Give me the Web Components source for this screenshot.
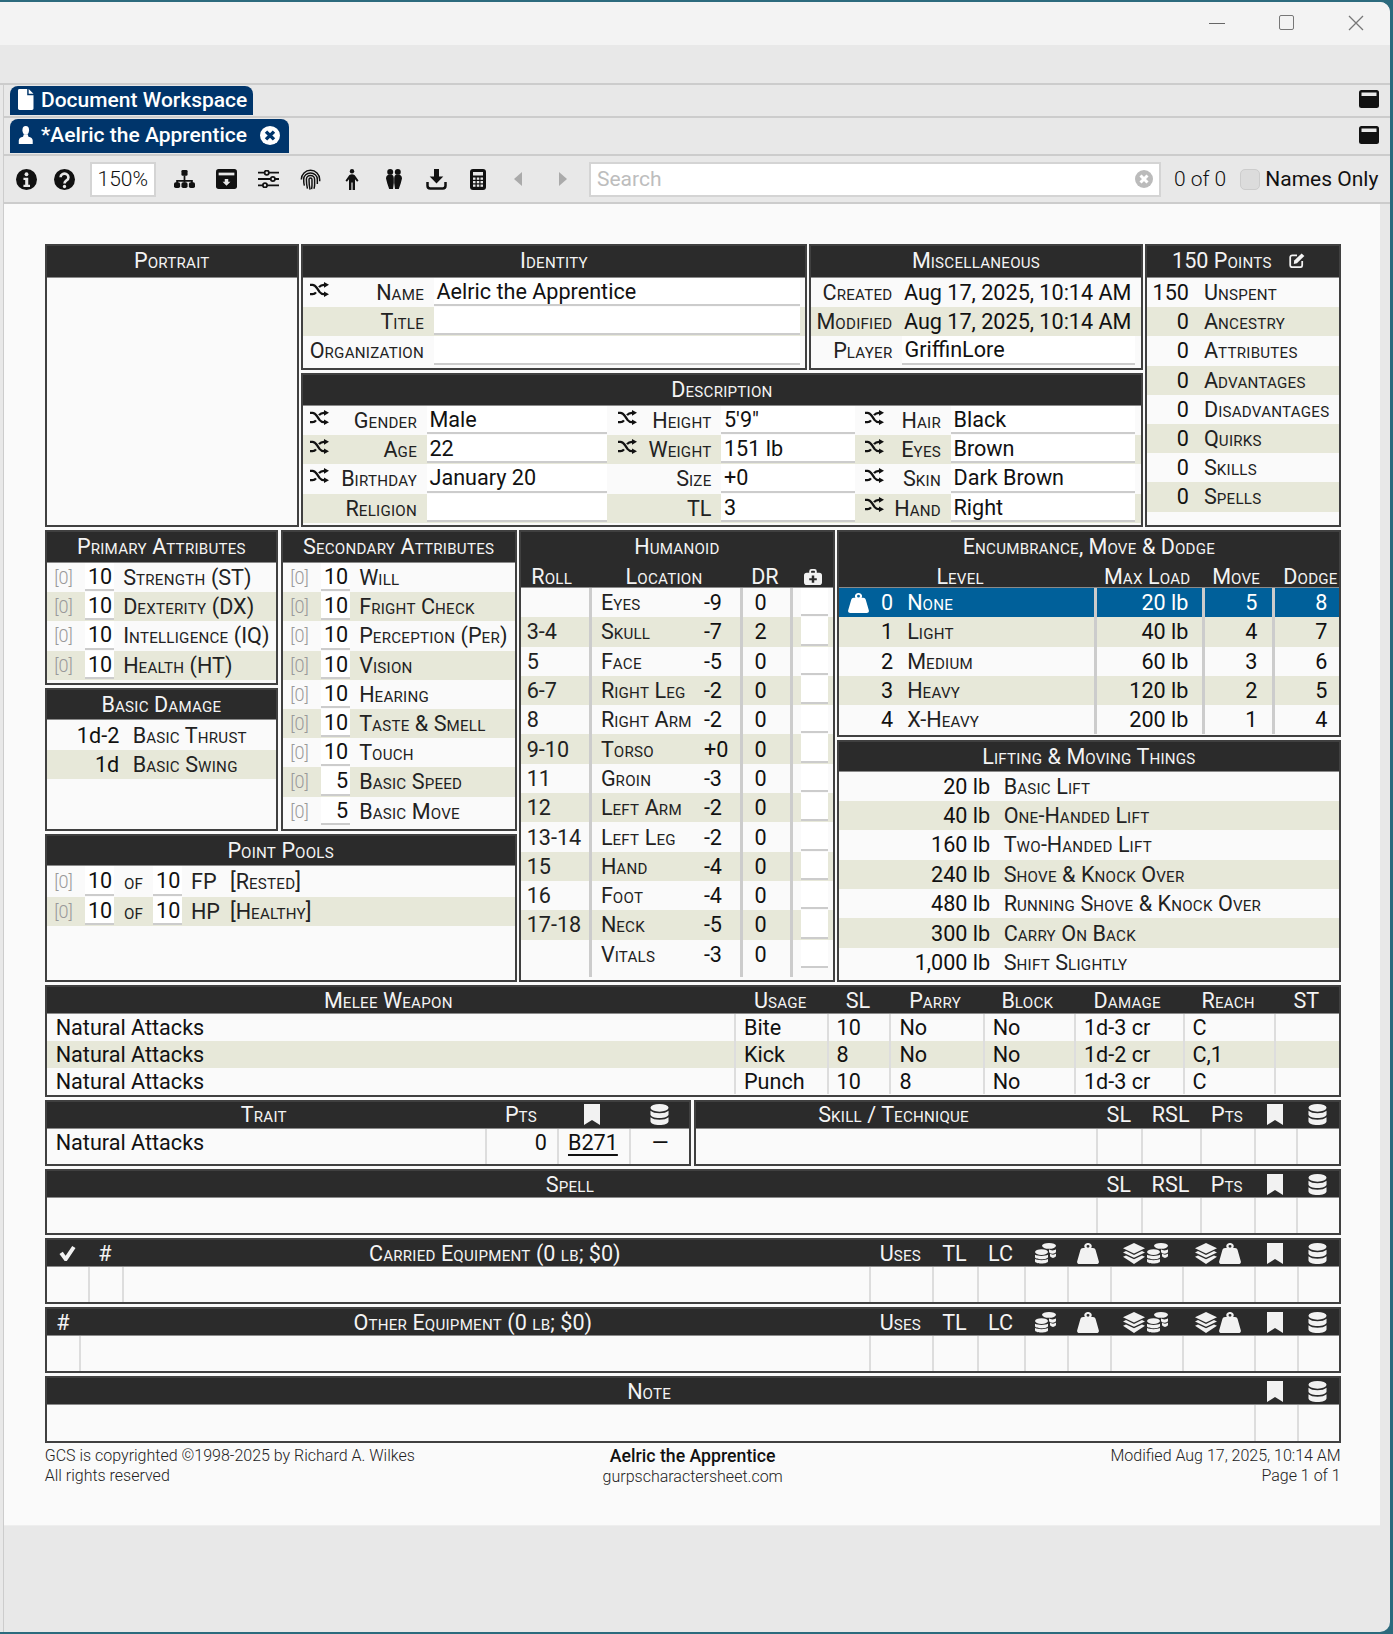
<!DOCTYPE html>
<html lang="en"><head><meta charset="utf-8"><title>GCS</title>
<style>
html,body{margin:0;padding:0;background:#2c6a7d;width:1393px;height:1634px;overflow:hidden}
body{font-family:Roboto,"Liberation Sans",sans-serif;font-size:21.6px;color:#111}
</style></head>
<body>
<gcs-window>
 <gcs-dock label="Document Workspace" icon="doc" style="border-top:0;--dm:3px"></gcs-dock>
 <gcs-dock label="*Aelric the Apprentice" icon="bust" closable style="--dh:35px;--th:34px;--pr:9px;--dm:2px"></gcs-dock>
 <gcs-toolbar></gcs-toolbar>
 <gcs-page>
 <gcs-sheet>
  <gcs-top>
   <gcs-panel title="Portrait" style="grid-column:1;grid-row:1 / span 2;--hh:32px"></gcs-panel>
   <gcs-panel title="Identity" style="grid-column:2;grid-row:1;--hh:32px;--cols:131px 366px 1fr">
    <gcs-row><gcs-lbl shuffle>Name</gcs-lbl><gcs-fld>Aelric the Apprentice</gcs-fld></gcs-row>
    <gcs-row band><gcs-lbl>Title</gcs-lbl><gcs-fld></gcs-fld></gcs-row>
    <gcs-row><gcs-lbl style="padding-left:0">Organization</gcs-lbl><gcs-fld></gcs-fld></gcs-row>
   </gcs-panel>
   <gcs-panel title="Miscellaneous" style="grid-column:3;grid-row:1;--hh:32px;--cols:91px 233px 1fr;--lp:9.500px">
    <gcs-row><gcs-lbl style="padding-left:0">Created</gcs-lbl><gcs-val>Aug 17, 2025, 10:14 AM</gcs-val></gcs-row>
    <gcs-row band><gcs-lbl style="padding-left:0">Modified</gcs-lbl><gcs-val>Aug 17, 2025, 10:14 AM</gcs-val></gcs-row>
    <gcs-row><gcs-lbl>Player</gcs-lbl><gcs-fld>GriffinLore</gcs-fld></gcs-row>
   </gcs-panel>
   <gcs-panel title="150 Points" edit style="grid-column:4;grid-row:1 / span 2;--tg:17px;--hh:32px;--tpr:9px">
    <gcs-stat val="150">Unspent</gcs-stat><gcs-stat band val="0">Ancestry</gcs-stat><gcs-stat val="0">Attributes</gcs-stat><gcs-stat band val="0">Advantages</gcs-stat><gcs-stat val="0">Disadvantages</gcs-stat><gcs-stat band val="0">Quirks</gcs-stat><gcs-stat val="0">Skills</gcs-stat><gcs-stat band val="0">Spells</gcs-stat>
   </gcs-panel>
   <gcs-panel title="Description" style="grid-column:2 / span 2;grid-row:2;--cols:124px 180px 114.500px 133.500px 96px 184px 1fr">
    <gcs-row><gcs-lbl shuffle>Gender</gcs-lbl><gcs-fld>Male</gcs-fld><gcs-lbl shuffle style="--ll:11px">Height</gcs-lbl><gcs-fld>5'9"</gcs-fld><gcs-lbl shuffle style="--ll:10.500px">Hair</gcs-lbl><gcs-fld>Black</gcs-fld></gcs-row>
    <gcs-row band><gcs-lbl shuffle>Age</gcs-lbl><gcs-fld>22</gcs-fld><gcs-lbl shuffle style="--ll:11px">Weight</gcs-lbl><gcs-fld>151 lb</gcs-fld><gcs-lbl shuffle style="--ll:10.500px">Eyes</gcs-lbl><gcs-fld>Brown</gcs-fld></gcs-row>
    <gcs-row><gcs-lbl shuffle>Birthday</gcs-lbl><gcs-fld>January 20</gcs-fld><gcs-lbl>Size</gcs-lbl><gcs-fld>+0</gcs-fld><gcs-lbl shuffle style="--ll:10.500px">Skin</gcs-lbl><gcs-fld>Dark Brown</gcs-fld></gcs-row>
    <gcs-row band><gcs-lbl>Religion</gcs-lbl><gcs-fld></gcs-fld><gcs-lbl>TL</gcs-lbl><gcs-fld>3</gcs-fld><gcs-lbl shuffle style="--ll:10.500px">Hand</gcs-lbl><gcs-fld>Right</gcs-fld></gcs-row>
   </gcs-panel>
  </gcs-top>
  <gcs-flow style="height:452px">
   <gcs-flow style="flex-direction:column;gap:3px;width:472px">
    <gcs-flow style="height:301px">
     <gcs-flow style="flex-direction:column;gap:3px;width:233.500px">
      <gcs-panel title="Primary Attributes" style="height:155px">
       <gcs-attr val="10">Strength (ST)</gcs-attr><gcs-attr band val="10">Dexterity (DX)</gcs-attr><gcs-attr val="10">Intelligence (IQ)</gcs-attr><gcs-attr band val="10">Health (HT)</gcs-attr>
      </gcs-panel>
      <gcs-panel title="Basic Damage" style="flex:1;--hh:30px">
       <gcs-stat val="1d-2" style="--c:72.600px 1fr;--g:13.400px;height:30px">Basic Thrust</gcs-stat><gcs-stat band val="1d" style="--c:72.600px 1fr;--g:13.400px">Basic Swing</gcs-stat>
      </gcs-panel>
     </gcs-flow>
     <gcs-panel title="Secondary Attributes" style="flex:1">
      <gcs-attr val="10">Will</gcs-attr><gcs-attr band val="10">Fright Check</gcs-attr><gcs-attr val="10">Perception (Per)</gcs-attr><gcs-attr band val="10">Vision</gcs-attr><gcs-attr val="10">Hearing</gcs-attr><gcs-attr band val="10">Taste &amp; Smell</gcs-attr><gcs-attr val="10">Touch</gcs-attr><gcs-attr band val="5">Basic Speed</gcs-attr><gcs-attr val="5">Basic Move</gcs-attr>
     </gcs-panel>
    </gcs-flow>
    <gcs-panel title="Point Pools" style="flex:1;--hh:30px">
     <gcs-pool val="10" key="FP" style="height:30.500px">[Rested]</gcs-pool><gcs-pool band val="10" key="HP">[Healthy]</gcs-pool>
    </gcs-panel>
   </gcs-flow>
   <gcs-panel title="Humanoid" style="width:315.500px;--hh:56px;--tl:30px">
    <gcs-subhead slot="head" style="--cols:61px 163.700px 38px 1fr"><gcs-th>Roll</gcs-th><gcs-th>Location</gcs-th><gcs-th>DR</gcs-th><gcs-th style="padding-left:10px"><gcs-icon name="lock" w="18" h="16"></gcs-icon></gcs-th></gcs-subhead>
    <gcs-hit r="" p="-9" d="0">Eyes</gcs-hit>
    <gcs-hit band r="3-4" p="-7" d="2">Skull</gcs-hit>
    <gcs-hit r="5" p="-5" d="0">Face</gcs-hit>
    <gcs-hit band r="6-7" p="-2" d="0">Right Leg</gcs-hit>
    <gcs-hit r="8" p="-2" d="0">Right Arm</gcs-hit>
    <gcs-hit band r="9-10" p="+0" d="0">Torso</gcs-hit>
    <gcs-hit r="11" p="-3" d="0">Groin</gcs-hit>
    <gcs-hit band r="12" p="-2" d="0">Left Arm</gcs-hit>
    <gcs-hit r="13-14" p="-2" d="0">Left Leg</gcs-hit>
    <gcs-hit band r="15" p="-4" d="0">Hand</gcs-hit>
    <gcs-hit r="16" p="-4" d="0">Foot</gcs-hit>
    <gcs-hit band r="17-18" p="-5" d="0">Neck</gcs-hit>
    <gcs-hit r="" p="-3" d="0">Vitals</gcs-hit>
    <gcs-hit blank style="height:8px"></gcs-hit>
   </gcs-panel>
   <gcs-flow style="flex-direction:column;gap:2.500px;flex:1">
    <gcs-panel title="Encumbrance, Move &amp; Dodge" style="height:207px;--hh:56px;--tl:30px">
     <gcs-subhead slot="head" style="--cols:242px 132px 46px 1fr"><gcs-th>Level</gcs-th><gcs-th>Max Load</gcs-th><gcs-th>Move</gcs-th><gcs-th style="justify-content:flex-end;padding-right:1px">Dodge</gcs-th></gcs-subhead>
     <gcs-enc sel n="0" load="20 lb" move="5" dodge="8">None</gcs-enc>
     <gcs-enc band n="1" load="40 lb" move="4" dodge="7">Light</gcs-enc>
     <gcs-enc n="2" load="60 lb" move="3" dodge="6">Medium</gcs-enc>
     <gcs-enc band n="3" load="120 lb" move="2" dodge="5">Heavy</gcs-enc>
     <gcs-enc n="4" load="200 lb" move="1" dodge="4">X-Heavy</gcs-enc>
    </gcs-panel>
    <gcs-panel title="Lifting &amp; Moving Things" style="flex:1;--hh:30px;--c:151px 1fr;--g:13.500px;--sh:29.400px">
     <gcs-stat val="20 lb">Basic Lift</gcs-stat>
     <gcs-stat band val="40 lb">One-Handed Lift</gcs-stat>
     <gcs-stat val="160 lb">Two-Handed Lift</gcs-stat>
     <gcs-stat band val="240 lb">Shove &amp; Knock Over</gcs-stat>
     <gcs-stat val="480 lb">Running Shove &amp; Knock Over</gcs-stat>
     <gcs-stat band val="300 lb">Carry On Back</gcs-stat>
     <gcs-stat val="1,000 lb">Shift Slightly</gcs-stat>
    </gcs-panel>
   </gcs-flow>
  </gcs-flow>
  <gcs-panel style="--hh:27px;--cols:687.300px 92.600px 62.900px 93.200px 91.300px 108.600px 91.400px 1fr;height:111.500px">
   <gcs-tr slot="head" style="--rh:26px"><gcs-th style="padding-right:4px">Melee Weapon</gcs-th><gcs-th>Usage</gcs-th><gcs-th>SL</gcs-th><gcs-th style="padding-right:2px">Parry</gcs-th><gcs-th style="padding-right:2px">Block</gcs-th><gcs-th style="padding-right:2px">Damage</gcs-th><gcs-th>Reach</gcs-th><gcs-th>ST</gcs-th></gcs-tr>
   <gcs-tr><gcs-td>Natural Attacks</gcs-td><gcs-td>Bite</gcs-td><gcs-td>10</gcs-td><gcs-td>No</gcs-td><gcs-td>No</gcs-td><gcs-td>1d-3 cr</gcs-td><gcs-td>C</gcs-td><gcs-td></gcs-td></gcs-tr>
   <gcs-tr band><gcs-td>Natural Attacks</gcs-td><gcs-td>Kick</gcs-td><gcs-td>8</gcs-td><gcs-td>No</gcs-td><gcs-td>No</gcs-td><gcs-td>1d-2 cr</gcs-td><gcs-td>C,1</gcs-td><gcs-td></gcs-td></gcs-tr>
   <gcs-tr><gcs-td>Natural Attacks</gcs-td><gcs-td>Punch</gcs-td><gcs-td>10</gcs-td><gcs-td>8</gcs-td><gcs-td>No</gcs-td><gcs-td>1d-3 cr</gcs-td><gcs-td>C</gcs-td><gcs-td></gcs-td></gcs-tr>
  </gcs-panel>
  <gcs-flow style="height:66.500px">
   <gcs-panel style="width:646.500px;--hh:27px;--cols:438.300px 72px 72px 1fr">
    <gcs-tr slot="head" style="--rh:26px"><gcs-th style="padding-right:4px">Trait</gcs-th><gcs-th>Pts</gcs-th><gcs-th style="padding-right:2px"><gcs-icon name="bookmark" w="16" h="21"></gcs-icon></gcs-th><gcs-th><gcs-icon name="database" w="19" h="21"></gcs-icon></gcs-th></gcs-tr>
    <gcs-tr fill><gcs-td top>Natural Attacks</gcs-td><gcs-td top style="--jc:flex-end;padding:0 10px 0 0">0</gcs-td><gcs-td top style="padding-left:9px"><u style="text-underline-offset:4px;text-decoration-thickness:2px">B271</u></gcs-td><gcs-td top style="--jc:center;padding:0">—</gcs-td></gcs-tr>
   </gcs-panel>
   <gcs-panel style="flex:1;--hh:27px;--cols:400.800px 44.700px 59px 53.700px 42.300px 1fr">
    <gcs-tr slot="head" style="--rh:26px"><gcs-th style="padding-right:5px">Skill / Technique</gcs-th><gcs-th>SL</gcs-th><gcs-th>RSL</gcs-th><gcs-th>Pts</gcs-th><gcs-th><gcs-icon name="bookmark" w="16" h="21"></gcs-icon></gcs-th><gcs-th><gcs-icon name="database" w="19" h="21"></gcs-icon></gcs-th></gcs-tr>
    <gcs-tr fill><gcs-td></gcs-td><gcs-td></gcs-td><gcs-td></gcs-td><gcs-td></gcs-td><gcs-td></gcs-td><gcs-td></gcs-td></gcs-tr>
   </gcs-panel>
  </gcs-flow>
  <gcs-panel style="height:66px;--hh:27px;--cols:1049.600px 44.700px 59px 53.700px 42.300px 1fr">
   <gcs-tr slot="head" style="--rh:26px"><gcs-th style="padding-right:3px">Spell</gcs-th><gcs-th>SL</gcs-th><gcs-th>RSL</gcs-th><gcs-th>Pts</gcs-th><gcs-th><gcs-icon name="bookmark" w="16" h="21"></gcs-icon></gcs-th><gcs-th><gcs-icon name="database" w="19" h="21"></gcs-icon></gcs-th></gcs-tr>
   <gcs-tr fill><gcs-td></gcs-td><gcs-td></gcs-td><gcs-td></gcs-td><gcs-td></gcs-td><gcs-td></gcs-td><gcs-td></gcs-td></gcs-tr>
  </gcs-panel>
  <gcs-panel style="height:66px;--hh:27px;--cols:41px 34.300px 746.700px 63.300px 45px 47px 43px 43px 72px 71.700px 43.300px 1fr">
   <gcs-tr slot="head" style="--rh:26px"><gcs-th><gcs-icon name="check" w="17" h="15"></gcs-icon></gcs-th><gcs-th>#</gcs-th><gcs-th style="padding-right:1px">Carried Equipment (0 lb; $0)</gcs-th><gcs-th>Uses</gcs-th><gcs-th>TL</gcs-th><gcs-th>LC</gcs-th><gcs-th><gcs-icon name="coins" w="21" h="21"></gcs-icon></gcs-th><gcs-th><gcs-icon name="weight" w="22" h="21"></gcs-icon></gcs-th><gcs-th><gcs-icon name="layers" w="22" h="21"></gcs-icon><gcs-icon name="coins" w="21" h="21"></gcs-icon></gcs-th><gcs-th><gcs-icon name="layers" w="22" h="21"></gcs-icon><gcs-icon name="weight" w="22" h="21"></gcs-icon></gcs-th><gcs-th><gcs-icon name="bookmark" w="16" h="21"></gcs-icon></gcs-th><gcs-th><gcs-icon name="database" w="19" h="21"></gcs-icon></gcs-th></gcs-tr>
   <gcs-tr fill><gcs-td></gcs-td><gcs-td></gcs-td><gcs-td></gcs-td><gcs-td></gcs-td><gcs-td></gcs-td><gcs-td></gcs-td><gcs-td></gcs-td><gcs-td></gcs-td><gcs-td></gcs-td><gcs-td></gcs-td><gcs-td></gcs-td><gcs-td></gcs-td></gcs-tr>
  </gcs-panel>
  <gcs-panel style="height:66px;--hh:27px;--cols:32.300px 789.700px 63.300px 45px 47px 43px 43px 72px 71.700px 43.300px 1fr">
   <gcs-tr slot="head" style="--rh:26px"><gcs-th>#</gcs-th><gcs-th style="padding-right:2px">Other Equipment (0 lb; $0)</gcs-th><gcs-th>Uses</gcs-th><gcs-th>TL</gcs-th><gcs-th>LC</gcs-th><gcs-th><gcs-icon name="coins" w="21" h="21"></gcs-icon></gcs-th><gcs-th><gcs-icon name="weight" w="22" h="21"></gcs-icon></gcs-th><gcs-th><gcs-icon name="layers" w="22" h="21"></gcs-icon><gcs-icon name="coins" w="21" h="21"></gcs-icon></gcs-th><gcs-th><gcs-icon name="layers" w="22" h="21"></gcs-icon><gcs-icon name="weight" w="22" h="21"></gcs-icon></gcs-th><gcs-th><gcs-icon name="bookmark" w="16" h="21"></gcs-icon></gcs-th><gcs-th><gcs-icon name="database" w="19" h="21"></gcs-icon></gcs-th></gcs-tr>
   <gcs-tr fill><gcs-td></gcs-td><gcs-td></gcs-td><gcs-td></gcs-td><gcs-td></gcs-td><gcs-td></gcs-td><gcs-td></gcs-td><gcs-td></gcs-td><gcs-td></gcs-td><gcs-td></gcs-td><gcs-td></gcs-td><gcs-td></gcs-td></gcs-tr>
  </gcs-panel>
  <gcs-panel style="height:66.500px;--hh:27px;--cols:1207px 43.300px 1fr">
   <gcs-tr slot="head" style="--rh:26px"><gcs-th style="padding-right:2px">Note</gcs-th><gcs-th><gcs-icon name="bookmark" w="16" h="21"></gcs-icon></gcs-th><gcs-th><gcs-icon name="database" w="19" h="21"></gcs-icon></gcs-th></gcs-tr>
   <gcs-tr fill><gcs-td></gcs-td><gcs-td></gcs-td><gcs-td></gcs-td></gcs-tr>
  </gcs-panel>
  <gcs-foot></gcs-foot>
 </gcs-sheet>
 </gcs-page>
</gcs-window>
<script>
const band=(x,y,w)=>`M${x} ${y}c${w*.2} 1.600 ${w*.8} 1.600 ${w} 0v2.200c0 1.300-${w*.2} 2.400-${w/2} 2.400s-${w/2}-1.100-${w/2}-2.400z`;
const ICONS={
 info:['0 0 24 24',`<circle cx="12" cy="12" r="12"/><circle cx="12" cy="6" r="2.200" fill="#e8e8e8"/><path fill="#e8e8e8" d="M8.500 10h5.500v8h2v2.500H8.500V18h2v-5.500h-2z"/>`],
 help:['0 0 24 24',`<circle cx="12" cy="12" r="12"/><path fill="none" stroke="#e8e8e8" stroke-width="3" d="M7.500 9.500a4.500 4.200 0 1 1 6.800 3.600c-1.500 1-2.300 1.600-2.300 3.400"/><circle cx="12" cy="20" r="1.900" fill="#e8e8e8"/>`],
 sitemap:['0 0 24 20',`<rect x="8.500" width="7" height="6.500" rx="1.500"/><path fill="none" stroke="currentColor" stroke-width="2" d="M12 6v8M3.500 15v-3h17v3"/><rect y="13.500" width="7" height="6.500" rx="2"/><rect x="8.500" y="13.500" width="7" height="6.500" rx="2"/><rect x="17" y="13.500" width="7" height="6.500" rx="2"/>`],
 save:['0 0 24 22',`<rect width="24" height="22" rx="3"/><rect x="3" y="4" width="18" height="3" fill="#e8e8e8"/><path fill="#e8e8e8" d="M10 11h4v3h2.500L12 18.500 7.500 14H10z"/>`],
 sliders:['0 0 24 20',`<path fill="none" stroke="currentColor" stroke-width="2" d="M0 3h24M0 10h24M0 17h24"/><g fill="#e8e8e8" stroke="currentColor" stroke-width="2"><circle cx="10" cy="3" r="2.400"/><circle cx="17" cy="10" r="2.400"/><circle cx="8" cy="17" r="2.400"/></g>`],
 finger:['0 0 24 24',`<g fill="none" stroke="currentColor" stroke-width="1.700"><path d="M1.500 12c0-6 4.700-10.500 10.500-10.500S22.500 6 22.500 12v2"/><path d="M5 19c-.6-2-.8-4.500-.8-7 0-4.300 3.500-7.500 7.800-7.500s7.800 3.200 7.800 7.500v5"/><path d="M8.500 22.500C7.600 19 7.300 16 7.300 12c0-2.600 2.100-4.600 4.700-4.600s4.700 2 4.700 4.600v6c0 1.700-.2 3-.8 4.500"/><path d="M11.500 23.500c-.8-3.500-1.200-7-1.200-11.500 0-1 .7-1.800 1.700-1.800s1.700.8 1.700 1.800v6.500c0 1.700-.2 3-.5 4.500"/></g>`],
 person:['0 0 14 21',`<circle cx="7" cy="2.200" r="2.200"/><path d="M7 5.200c-1.800 0-2.700.7-3.300 1.800L.5 11.500l1.400 1.200L4 10.300V21h2.400v-7.500h1.200V21H10V10.300l2.100 2.400 1.400-1.200L10.300 7c-.6-1.100-1.500-1.800-3.300-1.800z"/>`],
 people:['0 0 16 20',`<ellipse cx="4.200" cy="2.900" rx="3" ry="2.900"/><ellipse cx="11.800" cy="2.900" rx="3" ry="2.900"/><path d="M0 9.500c0-2.500 1.600-4 4.300-4s3.500 1.500 3.500 4V14l-.8 6H3.200L1.300 14.500zM16 9.500c0-2.500-1.600-4-4.300-4s-3.500 1.500-3.500 4V14l.8 6h3.800l1.900-5.500z"/>`],
 download:['0 0 21 21',`<path d="M8 0h5v7.500h4.300l-6.800 7-6.800-7H8z"/><path fill="none" stroke="currentColor" stroke-width="2.500" d="M1.500 13v3.800a2.700 2.700 0 0 0 2.700 2.700h12.600a2.700 2.700 0 0 0 2.700-2.700V13"/>`],
 calc:['0 0 16 21',`<rect width="16" height="21" rx="3"/><rect x="3" y="3" width="10" height="3.500" fill="#e8e8e8"/><g fill="#e8e8e8"><rect x="3" y="8.500" width="2.500" height="2.300"/><rect x="6.800" y="8.500" width="2.500" height="2.300"/><rect x="10.500" y="8.500" width="2.500" height="2.300"/><rect x="3" y="12" width="2.500" height="2.300"/><rect x="6.800" y="12" width="2.500" height="2.300"/><rect x="10.500" y="12" width="2.500" height="2.300"/><rect x="3" y="15.500" width="2.500" height="2.300"/><rect x="6.800" y="15.500" width="2.500" height="2.300"/><rect x="10.500" y="15.500" width="2.500" height="2.300"/></g>`],
 left:['0 0 8 14',`<path d="M8 0v14L0 7z"/>`],
 right:['0 0 8 14',`<path d="M0 0v14l8-7z"/>`],
 clear:['0 0 18 18',`<circle cx="9" cy="9" r="9"/><path stroke="#fff" stroke-width="3" d="M5.500 5.500l7 7M12.500 5.500l-7 7"/>`],
 dock:['0 0 20 18',`<rect width="20" height="18" rx="2.500"/><rect x="2.500" y="2.500" width="15" height="3.500" fill="#e8e8e8"/>`],
 doc:['0 0 16 22',`<path d="M0 1.500A1.500 1.500 0 0 1 1.500 0H9.500v6.500H16V20.500a1.500 1.500 0 0 1-1.500 1.500H1.500A1.500 1.500 0 0 1 0 20.500zM11 0l5 5h-5z"/>`],
 bust:['0 0 16 18',`<ellipse cx="8" cy="4.200" rx="3.400" ry="4.200"/><path d="M6 8.200h4l.8 2.500c2.700.8 4.400 1.600 4.400 3.800V18H.8v-3.500c0-2.200 1.700-3 4.400-3.800z"/>`],
 close:['0 0 20 20',`<circle cx="10" cy="10" r="10"/><path stroke="#00356b" stroke-width="3.400" d="M6 6l8 8M14 6l-8 8"/>`],
 shuffle:['0 0 19 16',`<path fill="none" stroke="currentColor" stroke-width="2.300" d="M0 3h2.500c2 0 3 1 4.500 3.500l2.500 4c1.500 2 2.500 2.500 4.500 2.500h1.500M0 13h2.500c1.600 0 2.500-.6 3.500-2M9 5.500C10.500 3.600 12 3 14 3h1.500"/><path d="M14 0l5 3-5 3zM14 10l5 3-5 3z"/>`],
 edit:['0 0 20 19',`<path fill="none" stroke="currentColor" stroke-width="2.200" d="M10 3H4a2.500 2.500 0 0 0-2.500 2.500v10A2.500 2.500 0 0 0 4 18h10a2.500 2.500 0 0 0 2.500-2.500V10"/><path d="M6.500 9.500L15.800.6l3.400 3.300-9.300 9.200-3.900.7z"/>`],
 lock:['0 0 19 17',`<path fill-rule="evenodd" d="M5.500 4V2.500A2.500 2.500 0 0 1 8 0h3a2.500 2.500 0 0 1 2.500 2.500V4H16a3 3 0 0 1 3 3v7a3 3 0 0 1-3 3H3a3 3 0 0 1-3-3V7a3 3 0 0 1 3-3zM7.500 4h4V2.500a.7.700 0 0 0-.7-.7H8.200a.7.700 0 0 0-.7.700zM8.200 7v2.700H5.500v2.200h2.700v2.700h2.600v-2.700h2.700V9.700h-2.700V7z"/>`],
 weight:['0 0 22 22',`<path fill-rule="evenodd" d="M11 0a3.500 3.500 0 0 1 3.200 5.300H16c1.300 0 2.300.9 2.600 2.100L21.800 19c.5 1.600-.5 3-2.200 3H2.400C.7 22-.3 20.600.2 19L3.400 7.400c.3-1.200 1.300-2.100 2.600-2.100h1.800A3.500 3.500 0 0 1 11 0zm0 2a1.500 1.500 0 1 0 0 3 1.500 1.500 0 0 0 0-3z"/>`],
 bookmark:['0 0 16 21',`<path d="M0 0h16v21l-8-5-8 5z"/>`],
 database:['0 0 20 22',`<ellipse cx="10" cy="4" rx="9.500" ry="4"/><path d="M.5 7.200C2.500 9 5.800 9.800 10 9.800s7.500-.8 9.500-2.600V11c0 2-4.200 3.700-9.500 3.700S.5 13 .5 11zM.5 14c2 1.800 5.300 2.600 9.500 2.600s7.500-.8 9.500-2.600v4c0 2.200-4.200 4-9.500 4S.5 20.200.5 18z"/>`],
 coins:['0 0 21 22',`<ellipse cx="14" cy="3" rx="7" ry="3"/><path d="${band(14,6.600,7)}${band(15,11,6)}"/><ellipse cx="6.500" cy="9.500" rx="6.500" ry="3"/><path d="${band(0,12.400,13)}${band(0,16.800,13)}"/>`],
 layers:['0 0 22 22',`<path d="M11 0l11 5.500L11 11 0 5.500zM3 8.500l8 4 8-4 3 1.500-11 5.500L0 10zM3 13l8 4 8-4 3 1.500L11 22 0 14.500z"/>`],
 check:['0 0 18 16',`<path d="M.5 8.500l3.500-2.500 3 4.500L14 0l3.500 2.200L8.300 16H6z"/>`],
};
const def=(n,css,html='<slot></slot>',render)=>customElements.define(n,class extends HTMLElement{
 constructor(){super();this.attachShadow({mode:'open'}).innerHTML=`<style>${css}</style>${html}`}
 connectedCallback(){if(render)render(this,this.shadowRoot)}
});
const attr=(h,n)=>h.getAttribute(n)||'';
const svg=(name,w,h)=>{const i=ICONS[name];return `<svg xmlns="http://www.w3.org/2000/svg" width="${w}" height="${h}" viewBox="${i[0]}" fill="currentColor" preserveAspectRatio="none" style="display:block;flex:none">${i[1]}</svg>`};
/* small capitals the way the app draws them: lower-case runs at .7em, the DOM text stays as written */
const SMALL='font-size:.7em;text-transform:uppercase;letter-spacing:.25px';
const scHTML=t=>t.replace(/[&<]|[a-z]+/g,m=>m==='&'?'&amp;':m==='<'?'&lt;':`<span style="${SMALL}">${m}</span>`);
const scLight=h=>{[...h.childNodes].forEach(n=>{if(n.nodeType===3&&n.textContent.trim()){const s=document.createElement('span');s.innerHTML=scHTML(n.textContent);n.replaceWith(s)}})};
const BAND='#e7e8d9';

def('gcs-icon',':host{display:inline-flex;flex:none;align-items:center;justify-content:center;line-height:0}','',(h,r)=>{
 const s=document.createElement('span');s.style.display='contents';s.innerHTML=svg(attr(h,'name'),attr(h,'w')||18,attr(h,'h')||18);r.appendChild(s)});

def('gcs-window',`
 :host{display:flex;flex-direction:column;width:1390px;height:1630px;margin-top:2px;background:#e8e8e8;border-radius:0 10px 10px 0;overflow:hidden}
 .title{height:43px;background:#f3f3f3;flex:none;display:flex;justify-content:flex-end}
 .band{height:38px;flex:none;border-bottom:2px solid #ccc}
 .min{width:16px;height:1px;background:#666;margin:20.500px 54px 0 0}
 .max{width:13px;height:13px;border:1.500px solid #777;border-radius:2px;margin:13px 54px 0 0}
 .x{margin:13px 26px 0 0}
 .rest{flex:1;display:flex;flex-direction:column;margin-left:3px;border-left:1px solid #ccc;min-height:0}
`,`<div class="title"><div class="min"></div><div class="max"></div><svg class="x" width="16" height="16" viewBox="0 0 16 16"><path stroke="#777" stroke-width="1.300" d="M1 1l14 14M15 1L1 15"/></svg></div><div class="band"></div><div class="rest"><slot></slot></div>`);

def('gcs-dock',`
 :host{display:flex;align-items:flex-end;flex:none;height:var(--dh,30px);border-top:2px solid #ccc;padding:0 11px 1px 6px;box-sizing:content-box;justify-content:space-between}
 .tab{display:flex;align-items:center;background:#00356b;color:#fff;font-weight:500;height:var(--th,29px);box-sizing:border-box;padding:0 var(--pr,6px) 2px 8px;border-radius:8px 8px 0 0;gap:7.500px;font-size:21px;white-space:nowrap}
 .d{align-self:center;color:#111;display:block;line-height:0;margin-bottom:var(--dm,0)}
 #i{line-height:0}
`,`<div class="tab"><span id="i"></span><span id="t"></span><span id="c"></span></div><div class="d" id="d"></div>`,(h,r)=>{
 r.getElementById('t').textContent=attr(h,'label');
 const doc=attr(h,'icon')=='doc';
 r.getElementById('i').innerHTML=svg(attr(h,'icon'),15.500,doc?21:18);
 r.getElementById('d').innerHTML=svg('dock',20,18);
 const c=r.getElementById('c');
 if(h.hasAttribute('closable')){c.innerHTML=svg('close',20,19);c.style.marginLeft='5px'}else c.remove();
});

def('gcs-toolbar',`
 :host{display:flex;align-items:center;flex:none;height:46px;border-top:2px solid #ccc;border-bottom:2px solid #ccc;font-size:21px;color:#111;padding-left:12px}
 .in{box-sizing:border-box;background:#fff;border:2px solid #d4d4d4;height:35px;display:flex;align-items:center}
 .zoom{width:65.500px;margin-left:15px;justify-content:center;font-weight:300}
 .search{width:572px;margin-left:22px;padding:0 6px;justify-content:space-between;color:#bdbdbd}
 .count{margin-left:13px;font-weight:300}
 .chk{width:20px;height:21px;background:#dcdcdc;border:1px solid #ccc;box-sizing:border-box;border-radius:5px;margin-left:14px}
 .names{margin-left:5px}
 .ic{display:inline-block;line-height:0}
`,`<span class="ic">${svg('info',21,21)}</span><span class="ic" style="margin-left:17px">${svg('help',21,21)}</span>
 <div class="in zoom"><span>150%</span></div>
 <span class="ic" style="margin-left:18.500px">${svg('sitemap',21,18)}</span>
 <span class="ic" style="margin-left:21px">${svg('save',21,20)}</span>
 <span class="ic" style="margin-left:21px">${svg('sliders',21,18)}</span>
 <span class="ic" style="margin-left:21px">${svg('finger',21,21)}</span>
 <span class="ic" style="margin-left:24px">${svg('person',14,21)}</span>
 <span class="ic" style="margin-left:27px">${svg('people',16,20)}</span>
 <span class="ic" style="margin-left:24px">${svg('download',21,21)}</span>
 <span class="ic" style="margin-left:23px">${svg('calc',16,21)}</span>
 <span class="ic" style="margin-left:28px;color:#aaa">${svg('left',8,14)}</span>
 <span class="ic" style="margin-left:37px;color:#aaa">${svg('right',8,14)}</span>
 <div class="in search"><span>Search</span><span class="ic" style="color:#bbb">${svg('clear',18,18)}</span></div>
 <span class="count">0 of 0</span><span class="chk"></span><span class="names">Names Only</span>`);

def('gcs-page',`:host{display:block;flex:none;height:1322px;box-sizing:border-box;margin:0 10px 0 0;background:#fafafa;padding:40px 0 0 40.700px;border-bottom:1px solid #eee}`);
def('gcs-sheet',`:host{display:flex;flex-direction:column;gap:3px;width:1296px}`);
def('gcs-top',`:host{display:grid;grid-template-columns:254.300px 506px 334px 195.700px;grid-template-rows:126px 154px;gap:3px 2px;height:283px}`);
def('gcs-flow',`:host{display:flex;gap:2.500px}`);
def('gcs-panel',`
 :host{display:flex;flex-direction:column;box-sizing:border-box;border:2px solid #404040;background:#fafafa;min-width:0;overflow:hidden}
 .h{background:#2b2b2b;color:#f4f4f4;flex:none;box-sizing:border-box;height:var(--hh,31px);display:flex;flex-direction:column;align-items:stretch;border-bottom:1px solid #8a8a8a}
 .t{text-align:center;line-height:var(--tl,29px);display:flex;align-items:center;justify-content:center;gap:var(--tg,0);white-space:nowrap;padding-right:var(--tpr,0)}
 .t:empty{display:none}
 .b{flex:1;display:flex;flex-direction:column;min-height:0}
`,`<div class="h"><div class="t" id="t"></div><slot name="head"></slot></div><div class="b"><slot></slot></div>`,(h,r)=>{
 const t=r.getElementById('t');const title=attr(h,'title');
 if(title){const w=document.createElement('span');w.innerHTML=scHTML(title);t.appendChild(w)}
 if(h.hasAttribute('edit')){const s=document.createElement('span');s.innerHTML=svg('edit',16,15);s.style.lineHeight=0;s.style.marginTop='-3px';t.appendChild(s)}
});
def('gcs-row',`:host{display:grid;grid-template-columns:var(--cols);height:29.200px;align-items:stretch;flex:none;box-sizing:border-box}
 :host([band]){background:${BAND}}`);
def('gcs-lbl',`:host{display:flex;align-items:center;justify-content:flex-end;padding:0 var(--lp,10px) 0 var(--ll,7px);white-space:nowrap;color:#222;min-width:0}
 .s{margin-right:auto;line-height:0;margin-top:-7px;display:block;color:#111}.s:empty{display:none}`,`<span class="s" id="s"></span><slot></slot>`,(h,r)=>{
 scLight(h);if(h.hasAttribute('shuffle'))r.getElementById('s').innerHTML=svg('shuffle',19,15)});
def('gcs-val',`:host{display:flex;align-items:center;white-space:nowrap;padding-left:2px;color:#111}`);
def('gcs-fld',`:host{display:flex;align-items:center;background:#fff;border-bottom:2px solid #ccc;padding:1px 0 0 2.500px;white-space:nowrap;color:#111;box-sizing:border-box;height:calc(100% - 1px)}`);
def('gcs-attr',`
 :host{display:grid;grid-template-columns:38px 29.500px 1fr;height:29.200px;align-items:stretch;flex:none}
 :host([band]){background:${BAND}}
 .p{color:#999;font-weight:300;padding-left:7.500px;display:flex;align-items:center;font-size:18px}
 .f{background:#fff;border-bottom:2px solid #ccc;padding:1px 2px 0 0;display:flex;align-items:center;justify-content:flex-end;box-sizing:border-box;height:calc(100% - 1px)}
 .l{display:flex;align-items:center;padding-left:9px;white-space:nowrap;color:#222}
`,`<span class="p">[0]</span><span class="f" id="v"></span><span class="l"><slot></slot></span>`,(h,r)=>{scLight(h);r.getElementById('v').textContent=attr(h,'val')});
def('gcs-stat',`
 :host{display:grid;grid-template-columns:var(--c,42px 1fr);height:var(--sh,29.200px);align-items:center;flex:none;column-gap:var(--g,15px)}
 :host([band]){background:${BAND}}
 .v{text-align:right;white-space:nowrap}
 .l{white-space:nowrap;color:#222}
`,`<span class="v" id="v"></span><span class="l"><slot></slot></span>`,(h,r)=>{scLight(h);r.getElementById('v').textContent=attr(h,'val')});
def('gcs-pool',`
 :host{display:grid;grid-template-columns:38px 29.500px 38.700px 29.500px 1fr;height:29.300px;align-items:stretch;flex:none}
 :host([band]){background:${BAND}}
 .p{color:#999;font-weight:300;padding-left:7.500px;display:flex;align-items:center;font-size:18px}
 .f{background:#fff;border-bottom:2px solid #ccc;display:flex;align-items:center;justify-content:flex-end;padding:1px 2px 0 0;box-sizing:border-box;height:calc(100% - 1px)}
 .o{display:flex;align-items:center;justify-content:center;color:#222}
 .l{display:flex;align-items:center;white-space:nowrap;color:#222;padding-left:8.600px}
 .k{width:39px}
`,`<span class="p">[0]</span><span class="f" id="a"></span><span class="o"><span>${scHTML('of')}</span></span><span class="f" id="b"></span><span class="l"><span class="k" id="k"></span><slot></slot></span>`,(h,r)=>{
 scLight(h);r.getElementById('a').textContent=r.getElementById('b').textContent=attr(h,'val');r.getElementById('k').textContent=attr(h,'key')});
def('gcs-hit',`
 :host{display:grid;grid-template-columns:68.200px 114.500px 36.500px 50px 11px 26.300px 1fr;height:29.300px;align-items:stretch;flex:none;white-space:nowrap}
 :host([band]){background:${BAND}}
 div{display:flex;align-items:center;box-sizing:border-box}
 .r{padding-left:5.500px;color:#222}
 .n{border-left:3px solid #ccc;padding-left:8.500px;color:#222}
 .d{border-left:3px solid #ccc;padding-left:11px}
 .s{border-left:3px solid #ccc}
 .f{background:#fff;border-bottom:2px solid #ccc;height:calc(100% - 1px)}
 :host([blank]) .f{background:none;border:0}
`,`<div class="r" id="r"></div><div class="n"><slot></slot></div><div class="p" id="p"></div><div class="d" id="d"></div><div class="s"></div><div class="f"></div><div></div>`,(h,r)=>{
 scLight(h);['r','p','d'].forEach(k=>r.getElementById(k).textContent=attr(h,k))});
def('gcs-enc',`
 :host{display:grid;grid-template-columns:255.300px 108px 70px 1fr;height:29.300px;align-items:stretch;flex:none;white-space:nowrap}
 :host([band]){background:${BAND}}
 :host([sel]){background:#00609a;color:#fff}
 :host([sel]) .l{color:#fff}
 div{display:flex;align-items:center;box-sizing:border-box}
 .i{padding-left:9px;line-height:0;color:#fff;width:35px;box-sizing:border-box;flex:none}
 .n{text-align:right;width:19px;flex:none}
 .l{color:#222;padding-left:14px}
 .m{border-left:3px solid #ccc;justify-content:flex-end;padding-right:14px}
 .mv{padding-right:15px}.dg{padding-right:11.400px}
`,`<div class="a"><span class="i" id="i"></span><span class="n" id="n"></span><span class="l"><slot></slot></span></div><div class="m" id="m"></div><div class="m mv" id="v"></div><div class="m dg" id="g"></div>`,(h,r)=>{
 scLight(h);r.getElementById('n').textContent=attr(h,'n');r.getElementById('m').textContent=attr(h,'load');r.getElementById('v').textContent=attr(h,'move');r.getElementById('g').textContent=attr(h,'dodge');
 if(h.hasAttribute('sel'))r.getElementById('i').innerHTML=svg('weight',21,20)});
def('gcs-subhead',`:host{display:grid;grid-template-columns:var(--cols);color:#f4f4f4;height:25px;align-items:center;flex:none}`);
def('gcs-th',`:host{display:flex;align-items:center;justify-content:center;gap:2px;white-space:nowrap;color:#f4f4f4;min-width:0;height:100%;box-sizing:border-box}
 ::slotted(gcs-icon){color:#f2f2f2}`,'<slot></slot>',(h)=>scLight(h));
def('gcs-tr',`:host{display:grid;grid-template-columns:var(--cols);height:var(--rh,27px);align-items:stretch}
 :host([band]){background:${BAND}}
 :host([fill]){flex:1;height:auto}`);
def('gcs-td',`:host{display:flex;align-items:center;box-sizing:border-box;padding-left:8px;white-space:nowrap;color:#111;border-left:2px solid #ddd;justify-content:var(--jc,flex-start);min-width:0}
 :host([top]){align-items:flex-start;line-height:27px}
 :host(:first-child){border-left:0;padding-left:9px}`);
def('gcs-foot',`
 :host{display:grid;grid-template-columns:1fr 1fr 1fr;font-size:16px;line-height:20px;color:#222;font-weight:300;white-space:nowrap}
 .c{text-align:center}.e{text-align:right}
 b{font-weight:500;color:#111;font-size:17.700px}
`,`<div>GCS is copyrighted ©1998-2025 by Richard A. Wilkes<br>All rights reserved</div><div class="c"><b>Aelric the Apprentice</b><br>gurpscharactersheet.com</div><div class="e">Modified Aug 17, 2025, 10:14 AM<br>Page 1 of 1</div>`);
</script>
</body></html>
